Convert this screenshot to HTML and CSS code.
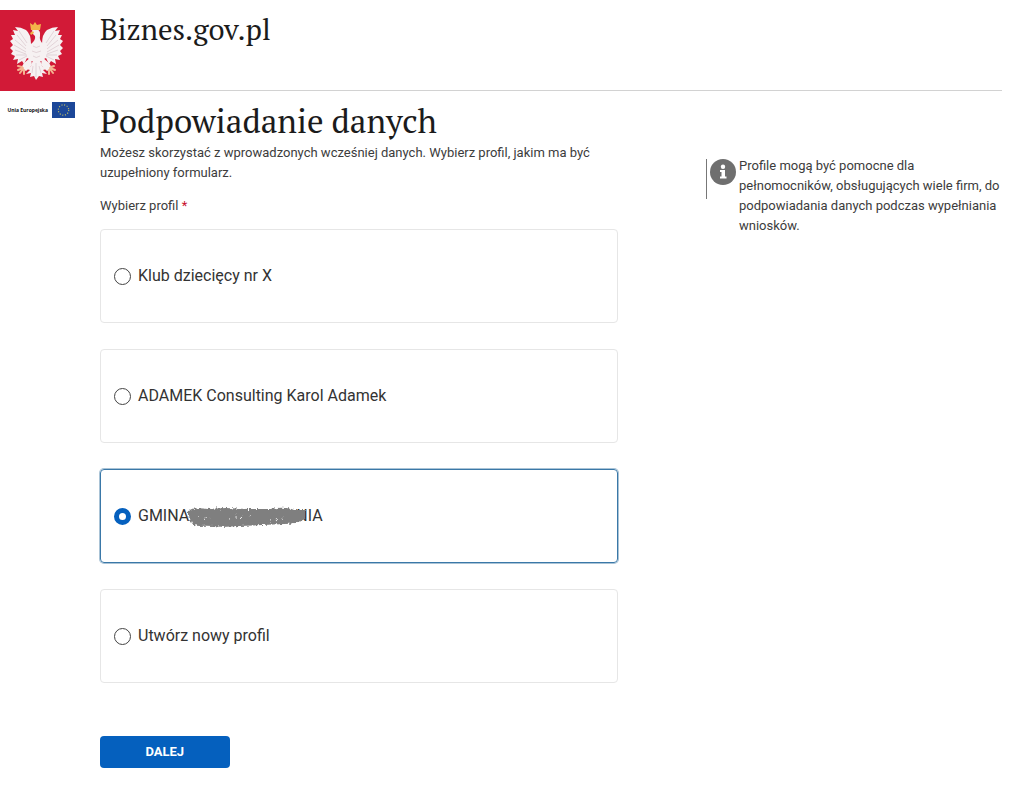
FILE: index.html
```html
<!DOCTYPE html>
<html lang="pl">
<head>
    <meta charset="UTF-8">
    <meta name="viewport" content="width=device-width, initial-scale=1.0">
    <title>Biznes.gov.pl</title>
    <link rel="stylesheet" href="styles.css">
</head>
<body>
    <div class="page">
        <div class="brand">
            <svg class="emblem" viewBox="0 0 75 81" aria-hidden="true">
                <rect width="75" height="81" fill="#d21a37"/>
                <!-- wings -->
                <g fill="#f6f1f2">
                    <path d="M31 34 Q31 24 26 20 Q21 17 15 17 L18 21 L13 20 L15 25 L11 25 L13 29 L10 31 L13 35 L10 38 L13 41 L11 44 L15 46 L13 50 L18 49 L17 54 L22 51 L24 54 L27 48 L31 50 Z"/>
                    <path d="M42 34 Q42 24 47 20 Q52 17 58 17 L55 21 L60 20 L58 25 L62 25 L60 29 L63 31 L60 35 L63 38 L60 41 L62 44 L58 46 L60 50 L55 49 L56 54 L51 51 L49 54 L46 48 L42 50 Z"/>
                    <!-- head and body -->
                    <path d="M32 23 Q31 19 36 19 Q41 20 40 26 Q39 30 43 34 Q46 43 42 51 L31 51 Q27 42 31 34 Q36 30 35 26 Z"/>
                    <!-- legs and tail -->
                    <path d="M31 47 L24 53 L21 58 L26 61 L32 55 Z M42 47 L49 53 L52 58 L47 61 L41 55 Z"/>
                    <path d="M33 50 L40 50 L42 56 L47 59 L43 60 L47 64 L42 63 L43 67 L39 66 L36 70 L34 66 L30 67 L31 63 L26 64 L30 60 L26 59 L31 56 Z"/>
                </g>
                <!-- feathers -->
                <g fill="none" stroke="#d5c0c6" stroke-width="0.6">
                    <path d="M19 21 L27 33 M17 25 L26 36 M15 30 L26 39 M14 35 L26 42 M15 40 L26 44 M16 45 L27 45 M19 50 L27 46"/>
                    <path d="M54 21 L46 33 M56 25 L47 36 M58 30 L47 39 M59 35 L47 42 M58 40 L47 44 M57 45 L46 45 M54 50 L46 46"/>
                    <path d="M33 36 Q36 39 40 36 M32 41 Q36 44 41 41 M33 46 Q36 49 40 46 M36 53 V67 M33 56 L32 63 M39 56 L41 63"/>
                </g>
                <!-- crown, beak and claws -->
                <path fill="#f3b54a" d="M31 20 L30 13 L33 15 L35 12 L37 15 L41 14 L40 20 Z"/>
                <path fill="#f3b54a" d="M33 21 L30 23 L31 25 L34 23 Z"/>
                <g fill="none" stroke="#f5b491" stroke-width="2" stroke-linecap="round">
                    <path d="M23 58 L18 60 M23 59 L20 63 M24 60 L24 64 M22 57 L18 56"/>
                    <path d="M50 58 L55 60 M50 59 L53 63 M49 60 L49 64 M51 57 L54 56"/>
                </g>
            </svg>
            <div class="eu">
                <span>Unia Europejska</span>
                <svg class="eu-flag" viewBox="0 0 23 16" aria-hidden="true">
                    <rect width="23" height="16" fill="#1c4798"/>
                    <circle cx="11.5" cy="8" r="5.2" fill="none" stroke="#b9b866" stroke-width="1.2" stroke-dasharray="1.1 1.62"/>
                </svg>
            </div>
        </div>

        <div class="content">
            <header class="site-header">
                <a class="site-name" href="#">Biznes.gov.pl</a>
            </header>

            <main class="columns">
                <form class="profile-form">
                    <h1>Podpowiadanie danych</h1>
                    <p class="intro">Możesz skorzystać z wprowadzonych wcześniej danych. Wybierz profil, jakim ma być uzupełniony formularz.</p>
                    <fieldset class="profiles">
                        <legend>Wybierz profil <span class="required">*</span></legend>
                        <label class="profile">
                            <input type="radio" name="profile">
                            <span>Klub dziecięcy nr X</span>
                        </label>
                        <label class="profile">
                            <input type="radio" name="profile">
                            <span>ADAMEK Consulting Karol Adamek</span>
                        </label>
                        <label class="profile selected">
                            <input type="radio" name="profile" checked>
                            <span>GMINA<svg class="scribble" viewBox="0 0 120 22" aria-hidden="true">
                                <defs>
                                    <filter id="rough" x="-5%" y="-20%" width="110%" height="140%">
                                        <feTurbulence type="fractalNoise" baseFrequency="0.5" numOctaves="2" seed="4"/>
                                        <feDisplacementMap in="SourceGraphic" scale="5" xChannelSelector="R" yChannelSelector="G"/>
                                    </filter>
                                </defs>
                                <g filter="url(#rough)">
                                    <path fill="#7f7f7f" d="M2 4 Q10 1 22 3 L40 2 L62 3 L84 3 Q100 0 108 4 L119 4 L119 13 Q110 18 98 18 L76 19 L54 20 L36 21 Q22 19 14 20 Q6 20 5 15 Q1 9 2 4 Z"/>
                                    <path fill="none" stroke="#f4f4f4" stroke-width="1" stroke-dasharray="1 5 2 4 1 8" d="M12 13 L30 11 M43 13 L66 10 M50 8 L60 15 M84 15 L98 12"/>
                                </g>
                            </svg>NIA</span>
                        </label>
                        <label class="profile">
                            <input type="radio" name="profile">
                            <span>Utwórz nowy profil</span>
                        </label>
                    </fieldset>
                    <button class="next" type="submit">DALEJ</button>
                </form>

                <aside class="hint">
                    <div class="hint-mark">
                        <svg viewBox="0 0 26 26" aria-hidden="true">
                            <circle cx="13" cy="13" r="13" fill="#6f6f6f"/>
                            <circle cx="13" cy="7.7" r="2.2" fill="#fff"/>
                            <path fill="#fff" d="M10 11 H15 V17.5 H16.5 V19.5 H10 V17.5 H11.5 V13 H10 Z"/>
                        </svg>
                    </div>
                    <p>Profile mogą być pomocne dla pełnomocników, obsługujących wiele firm, do podpowiadania danych podczas wypełniania wniosków.</p>
                </aside>
            </main>
        </div>
    </div>
</body>
</html>
```

FILE: styles.css
```css
* {
    box-sizing: border-box;
}
body {
    margin: 0;
    font-family: Roboto, Arial, sans-serif;
    font-size: 13px;
    line-height: 20px;
    color: #3c3c3c;
    background-color: #fff;
}
.page {
    display: flex;
    gap: 25px;
    padding: 10px 22px 18px 0;
}
.brand {
    flex: 0 0 75px;
}
.emblem {
    display: block;
    width: 100%;
}
.eu {
    display: flex;
    align-items: center;
    justify-content: flex-end;
    gap: 4px;
    margin-top: 11px;
    font-family: "Open Sans", sans-serif;
    font-size: 5px;
    font-weight: 700;
    line-height: 8px;
    color: #111;
    white-space: nowrap;
}
.eu-flag {
    width: 23px;
    height: 16px;
}
.content {
    flex: 1;
}
.site-header {
    height: 81px;
    border-bottom: 1px solid #d2d2d2;
}
.site-name {
    font-family: "PT Serif", "Liberation Serif", serif;
    font-size: 29px;
    line-height: 38px;
    color: #1b1b1b;
    text-decoration: none;
}
.columns {
    display: grid;
    grid-template-columns: 7fr 4fr;
    gap: 88px;
}
h1 {
    margin: 8px 0 0;
    font-family: "PT Serif", "Liberation Serif", serif;
    font-size: 33px;
    font-weight: 400;
    line-height: 44px;
    color: #1b1b1b;
}
.intro {
    margin: 0;
}
.profiles {
    display: flex;
    flex-direction: column;
    gap: 26px;
    margin: 0;
    padding: 0;
    border: 0;
}
legend {
    padding: 13px 0;
}
.required {
    color: #c8102e;
}
.profile {
    display: flex;
    align-items: center;
    gap: 7px;
    padding: 35px 13px;
    border: 1px solid #e6e6e6;
    border-radius: 4px;
    font-size: 16px;
    line-height: 22px;
    color: #333;
}
.profile.selected {
    border-color: #3a78a8;
    box-shadow: 0 0 0 1px #a9c3d6;
}
.profile input {
    appearance: none;
    flex: none;
    width: 17px;
    height: 17px;
    margin: 0;
    border: 1px solid #444;
    border-radius: 50%;
    background-color: #fff;
}
.profile input:checked {
    border: 5px solid #0560be;
}
.scribble {
    position: relative;
    width: 120px;
    height: 22px;
    margin: -2px -10px -2px -3px;
    vertical-align: middle;
}
.next {
    display: block;
    width: 25%;
    margin-top: 53px;
    padding: 6px;
    border: 0;
    border-radius: 4px;
    background-color: #0560be;
    color: #fff;
    font-family: inherit;
    font-size: 13px;
    font-weight: 700;
    line-height: 20px;
    cursor: pointer;
}
.hint {
    display: flex;
    align-items: flex-start;
    gap: 3px;
    padding-top: 65px;
}
.hint-mark {
    flex: none;
    height: 40px;
    margin-top: 3px;
    padding-left: 3px;
    border-left: 1px solid #777;
}
.hint-mark svg {
    width: 26px;
    height: 26px;
}
.hint p {
    margin: 0;
}
```
